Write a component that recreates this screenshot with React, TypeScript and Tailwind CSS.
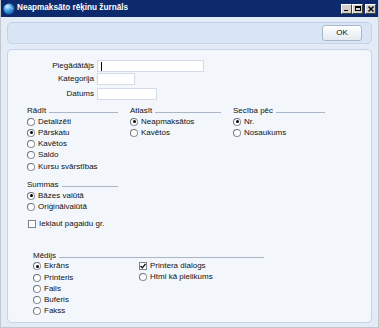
import React from 'react';

const Radio = ({ label, checked = false }: { label: string; checked?: boolean }) => (
  <div className="flex items-center h-[11.25px] gap-[3px]">
    <span className="w-[8px] h-[8px] rounded-full bg-white border border-[#8d949c] border-t-[#6d737a] border-l-[#6d737a] flex items-center justify-center shrink-0">
      {checked && <span className="w-[3px] h-[3px] rounded-full bg-black" />}
    </span>
    <span className="leading-none">{label}</span>
  </div>
);

const Check = ({ label, checked = false }: { label: string; checked?: boolean }) => (
  <div className="flex items-center h-[11px] gap-[3px]">
    <span className="w-[8px] h-[8px] bg-white border border-[#7d838a] flex items-center justify-center shrink-0">
      {checked && (
        <svg width="6" height="6" viewBox="0 0 6 6">
          <path d="M0.5 3 L2.3 4.8 L5.5 1" stroke="#111" strokeWidth="1.3" fill="none" />
        </svg>
      )}
    </span>
    <span className="leading-none">{label}</span>
  </div>
);

const Header = ({ label }: { label: string }) => (
  <div className="flex items-center h-[10px] gap-[3px]">
    <span className="leading-none">{label}</span>
    <span className="flex-1 h-px bg-[#aab6c6] mt-[3px]" />
  </div>
);

const Field = ({ label, width, cursor = false }: { label: string; width: string; cursor?: boolean }) => (
  <div className="flex items-center gap-[3px]">
    <span className="w-[86px] text-right leading-none">{label}</span>
    <div className={`${width} h-[12px] bg-white border border-[#d3dce8] flex items-center`}>
      {cursor && <span className="ml-[3px] w-px h-[9px] bg-black" />}
    </div>
  </div>
);

const TitleButton = ({ children }: { children: React.ReactNode }) => (
  <div className="w-[11px] h-[10px] bg-[#d4d0c8] border border-white border-r-[#404040] border-b-[#404040] flex items-center justify-center">
    {children}
  </div>
);

export default function App() {
  return (
    <div className="w-[379px] h-[328px] flex flex-col bg-[#e3ebf6] font-['Liberation_Sans',Arial,sans-serif] text-[8px] text-[#111] overflow-hidden border-l border-r border-b border-[#c4c8ce]">
      {/* title bar */}
      <div className="h-[17px] bg-[#0c2a6c] flex items-center pl-[2px] pr-[2px] shrink-0">
        <svg width="12" height="12" viewBox="0 0 12 12" className="shrink-0">
          <defs>
            <radialGradient id="g" cx="0.35" cy="0.3" r="0.8">
              <stop offset="0" stopColor="#c9ecff" />
              <stop offset="0.5" stopColor="#3b9be0" />
              <stop offset="1" stopColor="#104a9a" />
            </radialGradient>
          </defs>
          <circle cx="6" cy="6" r="5.5" fill="url(#g)" />
          <path d="M3 4 Q5 2 7 4 T10 6" stroke="#e8f6ff" strokeWidth="0.8" fill="none" opacity="0.7" />
        </svg>
        <span className="ml-[2px] text-white font-bold text-[8.2px] leading-none">Neapmaksāto rēķinu žurnāls</span>
        <div className="ml-auto flex items-center">
          <TitleButton>
            <span className="w-[4px] h-[1.5px] bg-black mt-[4px] -ml-[1px]" />
          </TitleButton>
          <TitleButton>
            <span className="w-[6px] h-[5px] border border-black border-t-2" />
          </TitleButton>
          <div className="w-[2px]" />
          <TitleButton>
            <svg width="6" height="6" viewBox="0 0 6 6">
              <path d="M0.5 0.5 L5.5 5.5 M5.5 0.5 L0.5 5.5" stroke="#000" strokeWidth="1.4" />
            </svg>
          </TitleButton>
        </div>
      </div>

      <div className="flex-1 flex flex-col px-[6px] pt-[5px] pb-[4px]">
        {/* toolbar panel */}
        <div className="h-[22px] rounded-[5px] border border-[#c2d3ea] bg-[#d9e5f5] flex items-center justify-end pr-[9px] shrink-0">
          <button className="w-[40px] h-[16px] rounded-[3px] border border-[#a9b7c9] bg-gradient-to-b from-white to-[#e4eaf2] text-[8px] leading-none">
            OK
          </button>
        </div>

        {/* main panel */}
        <div className="mt-[5px] flex-1 rounded-[5px] border border-[#c3d3e8] bg-[#f3f7fc] pt-[10px]">
          <div className="flex flex-col">
            <Field label="Piegādātājs" width="w-[107px]" cursor />
            <div className="mt-[1px]">
              <Field label="Kategorija" width="w-[38px]" />
            </div>
            <div className="mt-[3px]">
              <Field label="Datums" width="w-[60px]" />
            </div>
          </div>

          <div className="flex mt-[6px] pl-[19px]">
            <div className="w-[103px] pr-[12px]">
              <Header label="Rādīt" />
              <Radio label="Detalizēti" />
              <Radio label="Pārskatu" checked />
              <Radio label="Kavētos" />
              <Radio label="Saldo" />
              <Radio label="Kursu svārstības" />
            </div>
            <div className="w-[103px] pr-[12px]">
              <Header label="Atlasīt" />
              <Radio label="Neapmaksātos" checked />
              <Radio label="Kavētos" />
            </div>
            <div className="w-[103px] pr-[11px]">
              <Header label="Secība pēc" />
              <Radio label="Nr." checked />
              <Radio label="Nosaukums" />
            </div>
          </div>

          <div className="mt-[8px] pl-[19px] w-[122px] pr-[12px]">
            <Header label="Summas" />
            <Radio label="Bāzes valūtā" checked />
            <Radio label="Oriģinālvalūtā" />
          </div>

          <div className="mt-[6px] pl-[20px]">
            <Check label="Iekļaut pagaidu gr." />
          </div>

          <div className="mt-[21px] pl-[25px] w-[256px]">
            <Header label="Mēdijs" />
            <div className="flex">
              <div className="w-[106px]">
                <Radio label="Ekrāns" checked />
                <Radio label="Printeris" />
                <Radio label="Fails" />
                <Radio label="Buferis" />
                <Radio label="Fakss" />
              </div>
              <div>
                <Check label="Printera dialogs" checked />
                <Radio label="Html kā pielikums" />
              </div>
            </div>
          </div>
        </div>
      </div>
    </div>
  );
}
